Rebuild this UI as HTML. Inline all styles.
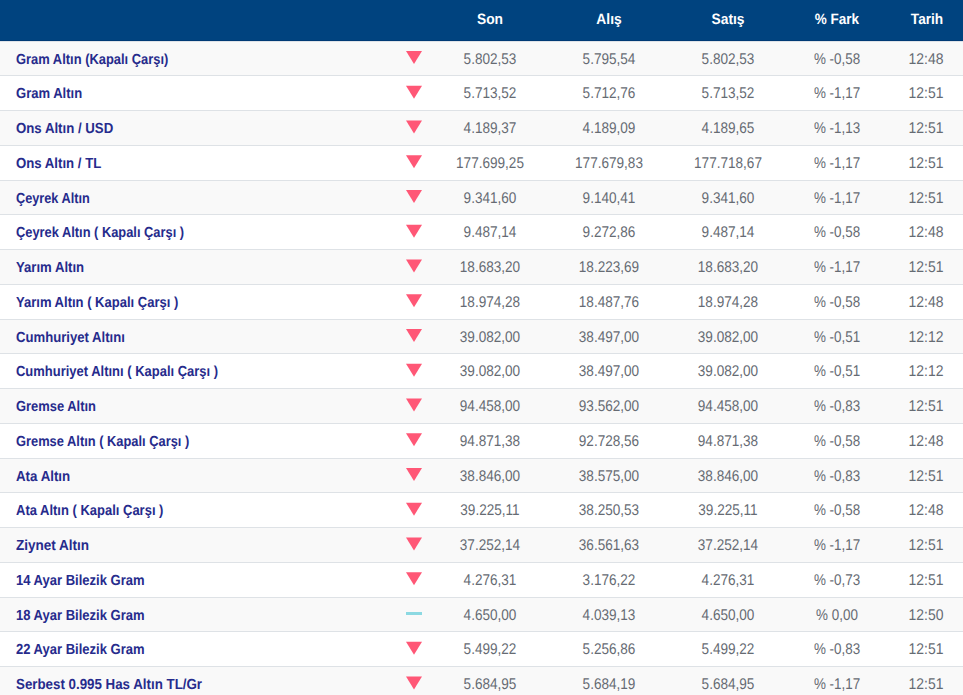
<!DOCTYPE html><html><head><meta charset="utf-8"><style>
*{margin:0;padding:0;box-sizing:border-box}
html,body{width:963px;height:695px;overflow:hidden;background:#fff;font-family:"Liberation Sans",sans-serif;text-rendering:geometricPrecision}
.hd{position:absolute;left:0;top:0;width:963px;height:41px;background:#00437f}
.hl{position:absolute;left:0;width:963px;height:1px;background:#003a75}
.r{position:absolute;left:0;width:963px}
.r.o{background:#f9f9f9}
.b{position:absolute;left:0;width:963px;height:1px;background:#dee2e6}
.t{position:absolute;white-space:pre;line-height:20px;height:20px}
.h{font-weight:bold;font-size:15px;color:#fff;transform:scaleX(1.0);transform-origin:50% 50%}
.nm{font-weight:bold;font-size:14.6px;color:#262b8c;transform-origin:0 50%;-webkit-text-stroke:0px #262b8c}
.v{font-size:15.5px;color:#666b73;letter-spacing:0px;transform:scaleX(0.845);transform-origin:50% 50%}
.tri{position:absolute;width:0;height:0;border-left:8.0px solid transparent;border-right:8.0px solid transparent;border-top:13px solid #ff5776}
.dash{position:absolute;width:16px;height:3px;background:#8cd9e2}
</style></head><body>
<div class="hd"></div>
<div class="hl" style="top:40px"></div>
<div class="hl" style="top:41px;background:#dfe3e8;z-index:2"></div>
<div class="t h" style="left:389.65px;width:200px;text-align:center;top:9.60px;transform:scaleX(0.92)">Son</div>
<div class="t h" style="left:508.95000000000005px;width:200px;text-align:center;top:9.60px;transform:scaleX(0.92)">Alış</div>
<div class="t h" style="left:627.65px;width:200px;text-align:center;top:9.60px;transform:scaleX(0.92)">Satış</div>
<div class="t h" style="left:737.25px;width:200px;text-align:center;top:9.60px;transform:scaleX(0.9)">% Fark</div>
<div class="t h" style="left:826.6px;width:200px;text-align:center;top:9.60px;transform:scaleX(0.91)">Tarih</div>
<div class="r o" style="top:41px;height:34px"></div>
<div class="b" style="top:75px"></div>
<div class="t nm" style="left:16px;top:50.00px;transform:scaleX(0.885)">Gram Altın (Kapalı Çarşı)</div>
<div class="t v" style="left:389.6px;width:200px;text-align:center;top:50.00px;transform:scaleX(0.875)">5.802,53</div>
<div class="t v" style="left:509px;width:200px;text-align:center;top:50.00px;transform:scaleX(0.875)">5.795,54</div>
<div class="t v" style="left:628px;width:200px;text-align:center;top:50.00px;transform:scaleX(0.875)">5.802,53</div>
<div class="t v" style="left:737px;width:200px;text-align:center;top:50.00px;transform:scaleX(0.865)">% -0,58</div>
<div class="t v" style="left:826.2px;width:200px;text-align:center;top:50.00px;transform:scaleX(0.9)">12:48</div>
<div class="b" style="top:110px"></div>
<div class="t nm" style="left:16px;top:84.00px;transform:scaleX(0.8928)">Gram Altın</div>
<div class="t v" style="left:389.6px;width:200px;text-align:center;top:84.00px;transform:scaleX(0.875)">5.713,52</div>
<div class="t v" style="left:509px;width:200px;text-align:center;top:84.00px;transform:scaleX(0.875)">5.712,76</div>
<div class="t v" style="left:628px;width:200px;text-align:center;top:84.00px;transform:scaleX(0.875)">5.713,52</div>
<div class="t v" style="left:737px;width:200px;text-align:center;top:84.00px;transform:scaleX(0.865)">% -1,17</div>
<div class="t v" style="left:826.2px;width:200px;text-align:center;top:84.00px;transform:scaleX(0.9)">12:51</div>
<div class="r o" style="top:111px;height:34px"></div>
<div class="b" style="top:145px"></div>
<div class="t nm" style="left:16px;top:119.00px;transform:scaleX(0.9058)">Ons Altın / USD</div>
<div class="t v" style="left:389.6px;width:200px;text-align:center;top:119.00px;transform:scaleX(0.875)">4.189,37</div>
<div class="t v" style="left:509px;width:200px;text-align:center;top:119.00px;transform:scaleX(0.875)">4.189,09</div>
<div class="t v" style="left:628px;width:200px;text-align:center;top:119.00px;transform:scaleX(0.875)">4.189,65</div>
<div class="t v" style="left:737px;width:200px;text-align:center;top:119.00px;transform:scaleX(0.865)">% -1,13</div>
<div class="t v" style="left:826.2px;width:200px;text-align:center;top:119.00px;transform:scaleX(0.9)">12:51</div>
<div class="b" style="top:180px"></div>
<div class="t nm" style="left:16px;top:154.00px;transform:scaleX(0.904)">Ons Altın / TL</div>
<div class="t v" style="left:389.6px;width:200px;text-align:center;top:154.00px;transform:scaleX(0.875)">177.699,25</div>
<div class="t v" style="left:509px;width:200px;text-align:center;top:154.00px;transform:scaleX(0.875)">177.679,83</div>
<div class="t v" style="left:628px;width:200px;text-align:center;top:154.00px;transform:scaleX(0.875)">177.718,67</div>
<div class="t v" style="left:737px;width:200px;text-align:center;top:154.00px;transform:scaleX(0.865)">% -1,17</div>
<div class="t v" style="left:826.2px;width:200px;text-align:center;top:154.00px;transform:scaleX(0.9)">12:51</div>
<div class="r o" style="top:181px;height:33px"></div>
<div class="b" style="top:214px"></div>
<div class="t nm" style="left:16px;top:189.00px;transform:scaleX(0.8719)">Çeyrek Altın</div>
<div class="t v" style="left:389.6px;width:200px;text-align:center;top:189.00px;transform:scaleX(0.875)">9.341,60</div>
<div class="t v" style="left:509px;width:200px;text-align:center;top:189.00px;transform:scaleX(0.875)">9.140,41</div>
<div class="t v" style="left:628px;width:200px;text-align:center;top:189.00px;transform:scaleX(0.875)">9.341,60</div>
<div class="t v" style="left:737px;width:200px;text-align:center;top:189.00px;transform:scaleX(0.865)">% -1,17</div>
<div class="t v" style="left:826.2px;width:200px;text-align:center;top:189.00px;transform:scaleX(0.9)">12:51</div>
<div class="b" style="top:249px"></div>
<div class="t nm" style="left:16px;top:223.00px;transform:scaleX(0.8805)">Çeyrek Altın ( Kapalı Çarşı )</div>
<div class="t v" style="left:389.6px;width:200px;text-align:center;top:223.00px;transform:scaleX(0.875)">9.487,14</div>
<div class="t v" style="left:509px;width:200px;text-align:center;top:223.00px;transform:scaleX(0.875)">9.272,86</div>
<div class="t v" style="left:628px;width:200px;text-align:center;top:223.00px;transform:scaleX(0.875)">9.487,14</div>
<div class="t v" style="left:737px;width:200px;text-align:center;top:223.00px;transform:scaleX(0.865)">% -0,58</div>
<div class="t v" style="left:826.2px;width:200px;text-align:center;top:223.00px;transform:scaleX(0.9)">12:48</div>
<div class="r o" style="top:250px;height:34px"></div>
<div class="b" style="top:284px"></div>
<div class="t nm" style="left:16px;top:258.00px;transform:scaleX(0.9)">Yarım Altın</div>
<div class="t v" style="left:389.6px;width:200px;text-align:center;top:258.00px;transform:scaleX(0.875)">18.683,20</div>
<div class="t v" style="left:509px;width:200px;text-align:center;top:258.00px;transform:scaleX(0.875)">18.223,69</div>
<div class="t v" style="left:628px;width:200px;text-align:center;top:258.00px;transform:scaleX(0.875)">18.683,20</div>
<div class="t v" style="left:737px;width:200px;text-align:center;top:258.00px;transform:scaleX(0.865)">% -1,17</div>
<div class="t v" style="left:826.2px;width:200px;text-align:center;top:258.00px;transform:scaleX(0.9)">12:51</div>
<div class="b" style="top:319px"></div>
<div class="t nm" style="left:16px;top:293.00px;transform:scaleX(0.8924)">Yarım Altın ( Kapalı Çarşı )</div>
<div class="t v" style="left:389.6px;width:200px;text-align:center;top:293.00px;transform:scaleX(0.875)">18.974,28</div>
<div class="t v" style="left:509px;width:200px;text-align:center;top:293.00px;transform:scaleX(0.875)">18.487,76</div>
<div class="t v" style="left:628px;width:200px;text-align:center;top:293.00px;transform:scaleX(0.875)">18.974,28</div>
<div class="t v" style="left:737px;width:200px;text-align:center;top:293.00px;transform:scaleX(0.865)">% -0,58</div>
<div class="t v" style="left:826.2px;width:200px;text-align:center;top:293.00px;transform:scaleX(0.9)">12:48</div>
<div class="r o" style="top:320px;height:33px"></div>
<div class="b" style="top:353px"></div>
<div class="t nm" style="left:16px;top:328.00px;transform:scaleX(0.8993)">Cumhuriyet Altını</div>
<div class="t v" style="left:389.6px;width:200px;text-align:center;top:328.00px;transform:scaleX(0.875)">39.082,00</div>
<div class="t v" style="left:509px;width:200px;text-align:center;top:328.00px;transform:scaleX(0.875)">38.497,00</div>
<div class="t v" style="left:628px;width:200px;text-align:center;top:328.00px;transform:scaleX(0.875)">39.082,00</div>
<div class="t v" style="left:737px;width:200px;text-align:center;top:328.00px;transform:scaleX(0.865)">% -0,51</div>
<div class="t v" style="left:826.2px;width:200px;text-align:center;top:328.00px;transform:scaleX(0.9)">12:12</div>
<div class="b" style="top:388px"></div>
<div class="t nm" style="left:16px;top:362.00px;transform:scaleX(0.889)">Cumhuriyet Altını ( Kapalı Çarşı )</div>
<div class="t v" style="left:389.6px;width:200px;text-align:center;top:362.00px;transform:scaleX(0.875)">39.082,00</div>
<div class="t v" style="left:509px;width:200px;text-align:center;top:362.00px;transform:scaleX(0.875)">38.497,00</div>
<div class="t v" style="left:628px;width:200px;text-align:center;top:362.00px;transform:scaleX(0.875)">39.082,00</div>
<div class="t v" style="left:737px;width:200px;text-align:center;top:362.00px;transform:scaleX(0.865)">% -0,51</div>
<div class="t v" style="left:826.2px;width:200px;text-align:center;top:362.00px;transform:scaleX(0.9)">12:12</div>
<div class="r o" style="top:389px;height:34px"></div>
<div class="b" style="top:423px"></div>
<div class="t nm" style="left:16px;top:397.00px;transform:scaleX(0.8862)">Gremse Altın</div>
<div class="t v" style="left:389.6px;width:200px;text-align:center;top:397.00px;transform:scaleX(0.875)">94.458,00</div>
<div class="t v" style="left:509px;width:200px;text-align:center;top:397.00px;transform:scaleX(0.875)">93.562,00</div>
<div class="t v" style="left:628px;width:200px;text-align:center;top:397.00px;transform:scaleX(0.875)">94.458,00</div>
<div class="t v" style="left:737px;width:200px;text-align:center;top:397.00px;transform:scaleX(0.865)">% -0,83</div>
<div class="t v" style="left:826.2px;width:200px;text-align:center;top:397.00px;transform:scaleX(0.9)">12:51</div>
<div class="b" style="top:458px"></div>
<div class="t nm" style="left:16px;top:432.00px;transform:scaleX(0.8816)">Gremse Altın ( Kapalı Çarşı )</div>
<div class="t v" style="left:389.6px;width:200px;text-align:center;top:432.00px;transform:scaleX(0.875)">94.871,38</div>
<div class="t v" style="left:509px;width:200px;text-align:center;top:432.00px;transform:scaleX(0.875)">92.728,56</div>
<div class="t v" style="left:628px;width:200px;text-align:center;top:432.00px;transform:scaleX(0.875)">94.871,38</div>
<div class="t v" style="left:737px;width:200px;text-align:center;top:432.00px;transform:scaleX(0.865)">% -0,58</div>
<div class="t v" style="left:826.2px;width:200px;text-align:center;top:432.00px;transform:scaleX(0.9)">12:48</div>
<div class="r o" style="top:459px;height:33px"></div>
<div class="b" style="top:492px"></div>
<div class="t nm" style="left:16px;top:467.00px;transform:scaleX(0.9115)">Ata Altın</div>
<div class="t v" style="left:389.6px;width:200px;text-align:center;top:467.00px;transform:scaleX(0.875)">38.846,00</div>
<div class="t v" style="left:509px;width:200px;text-align:center;top:467.00px;transform:scaleX(0.875)">38.575,00</div>
<div class="t v" style="left:628px;width:200px;text-align:center;top:467.00px;transform:scaleX(0.875)">38.846,00</div>
<div class="t v" style="left:737px;width:200px;text-align:center;top:467.00px;transform:scaleX(0.865)">% -0,83</div>
<div class="t v" style="left:826.2px;width:200px;text-align:center;top:467.00px;transform:scaleX(0.9)">12:51</div>
<div class="b" style="top:527px"></div>
<div class="t nm" style="left:16px;top:501.00px;transform:scaleX(0.8897)">Ata Altın ( Kapalı Çarşı )</div>
<div class="t v" style="left:389.6px;width:200px;text-align:center;top:501.00px;transform:scaleX(0.875)">39.225,11</div>
<div class="t v" style="left:509px;width:200px;text-align:center;top:501.00px;transform:scaleX(0.875)">38.250,53</div>
<div class="t v" style="left:628px;width:200px;text-align:center;top:501.00px;transform:scaleX(0.875)">39.225,11</div>
<div class="t v" style="left:737px;width:200px;text-align:center;top:501.00px;transform:scaleX(0.865)">% -0,58</div>
<div class="t v" style="left:826.2px;width:200px;text-align:center;top:501.00px;transform:scaleX(0.9)">12:48</div>
<div class="r o" style="top:528px;height:34px"></div>
<div class="b" style="top:562px"></div>
<div class="t nm" style="left:16px;top:536.00px;transform:scaleX(0.9265)">Ziynet Altın</div>
<div class="t v" style="left:389.6px;width:200px;text-align:center;top:536.00px;transform:scaleX(0.875)">37.252,14</div>
<div class="t v" style="left:509px;width:200px;text-align:center;top:536.00px;transform:scaleX(0.875)">36.561,63</div>
<div class="t v" style="left:628px;width:200px;text-align:center;top:536.00px;transform:scaleX(0.875)">37.252,14</div>
<div class="t v" style="left:737px;width:200px;text-align:center;top:536.00px;transform:scaleX(0.865)">% -1,17</div>
<div class="t v" style="left:826.2px;width:200px;text-align:center;top:536.00px;transform:scaleX(0.9)">12:51</div>
<div class="b" style="top:597px"></div>
<div class="t nm" style="left:16px;top:571.00px;transform:scaleX(0.892)">14 Ayar Bilezik Gram</div>
<div class="t v" style="left:389.6px;width:200px;text-align:center;top:571.00px;transform:scaleX(0.875)">4.276,31</div>
<div class="t v" style="left:509px;width:200px;text-align:center;top:571.00px;transform:scaleX(0.875)">3.176,22</div>
<div class="t v" style="left:628px;width:200px;text-align:center;top:571.00px;transform:scaleX(0.875)">4.276,31</div>
<div class="t v" style="left:737px;width:200px;text-align:center;top:571.00px;transform:scaleX(0.865)">% -0,73</div>
<div class="t v" style="left:826.2px;width:200px;text-align:center;top:571.00px;transform:scaleX(0.9)">12:51</div>
<div class="r o" style="top:598px;height:33px"></div>
<div class="b" style="top:631px"></div>
<div class="t nm" style="left:16px;top:606.00px;transform:scaleX(0.892)">18 Ayar Bilezik Gram</div>
<div class="dash" style="left:406px;top:612px"></div>
<div class="t v" style="left:389.6px;width:200px;text-align:center;top:606.00px;transform:scaleX(0.875)">4.650,00</div>
<div class="t v" style="left:509px;width:200px;text-align:center;top:606.00px;transform:scaleX(0.875)">4.039,13</div>
<div class="t v" style="left:628px;width:200px;text-align:center;top:606.00px;transform:scaleX(0.875)">4.650,00</div>
<div class="t v" style="left:737px;width:200px;text-align:center;top:606.00px;transform:scaleX(0.865)">% 0,00</div>
<div class="t v" style="left:826.2px;width:200px;text-align:center;top:606.00px;transform:scaleX(0.9)">12:50</div>
<div class="b" style="top:666px"></div>
<div class="t nm" style="left:16px;top:640.00px;transform:scaleX(0.892)">22 Ayar Bilezik Gram</div>
<div class="t v" style="left:389.6px;width:200px;text-align:center;top:640.00px;transform:scaleX(0.875)">5.499,22</div>
<div class="t v" style="left:509px;width:200px;text-align:center;top:640.00px;transform:scaleX(0.875)">5.256,86</div>
<div class="t v" style="left:628px;width:200px;text-align:center;top:640.00px;transform:scaleX(0.875)">5.499,22</div>
<div class="t v" style="left:737px;width:200px;text-align:center;top:640.00px;transform:scaleX(0.865)">% -0,83</div>
<div class="t v" style="left:826.2px;width:200px;text-align:center;top:640.00px;transform:scaleX(0.9)">12:51</div>
<div class="r o" style="top:667px;height:28px"></div>
<div class="t nm" style="left:16px;top:675.00px;transform:scaleX(0.9126)">Serbest 0.995 Has Altın TL/Gr</div>
<div class="t v" style="left:389.6px;width:200px;text-align:center;top:675.00px;transform:scaleX(0.875)">5.684,95</div>
<div class="t v" style="left:509px;width:200px;text-align:center;top:675.00px;transform:scaleX(0.875)">5.684,19</div>
<div class="t v" style="left:628px;width:200px;text-align:center;top:675.00px;transform:scaleX(0.875)">5.684,95</div>
<div class="t v" style="left:737px;width:200px;text-align:center;top:675.00px;transform:scaleX(0.865)">% -1,17</div>
<div class="t v" style="left:826.2px;width:200px;text-align:center;top:675.00px;transform:scaleX(0.9)">12:51</div>
<svg style="position:absolute;left:0;top:0" width="963" height="695"><g fill="#ff5776"><polygon points="406,51.10 422,51.10 414.0,64.10"/><polygon points="406,85.84 422,85.84 414.0,98.84"/><polygon points="406,120.58 422,120.58 414.0,133.58"/><polygon points="406,155.32 422,155.32 414.0,168.32"/><polygon points="406,190.06 422,190.06 414.0,203.06"/><polygon points="406,224.80 422,224.80 414.0,237.80"/><polygon points="406,259.54 422,259.54 414.0,272.54"/><polygon points="406,294.28 422,294.28 414.0,307.28"/><polygon points="406,329.02 422,329.02 414.0,342.02"/><polygon points="406,363.76 422,363.76 414.0,376.76"/><polygon points="406,398.50 422,398.50 414.0,411.50"/><polygon points="406,433.24 422,433.24 414.0,446.24"/><polygon points="406,467.98 422,467.98 414.0,480.98"/><polygon points="406,502.72 422,502.72 414.0,515.72"/><polygon points="406,537.46 422,537.46 414.0,550.46"/><polygon points="406,572.20 422,572.20 414.0,585.20"/><polygon points="406,641.68 422,641.68 414.0,654.68"/><polygon points="406,676.42 422,676.42 414.0,689.42"/></g></svg>
</body></html>
